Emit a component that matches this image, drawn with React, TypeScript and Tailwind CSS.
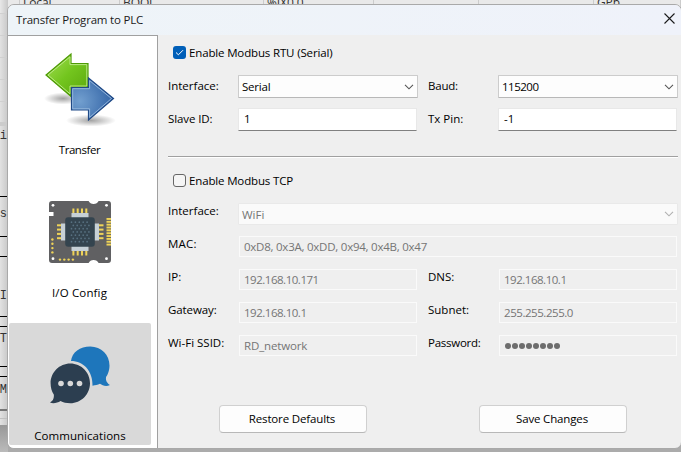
import React from "react";

const font = "font-['Open_Sans','Noto_Sans',sans-serif]";

function Chevron({ color }: { color: string }) {
  return (
    <svg className="mr-[3px] shrink-0" width="10" height="6" viewBox="0 0 10 6" fill="none" stroke={color} strokeWidth="1.1">
      <path d="M1 0.9 5 4.8 9 0.9" />
    </svg>
  );
}

function Label({ children, track = "" }: { children: string; track?: string }) {
  return <span className={`block h-[16px] w-[70px] shrink-0 whitespace-nowrap leading-[16px] ${track}`}>{children}</span>;
}

function Combo({ value, track = "", disabled }: { value: string; track?: string; disabled?: boolean }) {
  return (
    <div
      className={`flex min-w-0 flex-1 items-center justify-between rounded-[1px] border pl-[3px] ${
        disabled ? "h-[22px] border-[#e9e9e9] bg-[#fafafa] text-[#757575]" : "h-[23px] border-[#cccccc] border-b-[#b8b8b8] bg-[#fdfdfd]"
      }`}
    >
      <span className={`whitespace-nowrap pt-px leading-[16px] ${track}`}>{value}</span>
      <Chevron color={disabled ? "#b0b0b0" : "#555555"} />
    </div>
  );
}

function Field({ value }: { value: string }) {
  return (
    <div className="mr-px h-[23px] min-w-0 flex-1 border border-[#e8e8e8] border-b-[#808080] bg-white pl-[5px]">
      <span className="block leading-[20px]">{value}</span>
    </div>
  );
}

function DisabledField({ value, track = "" }: { value: string; track?: string }) {
  return (
    <div className="ml-px mr-px h-[21px] min-w-0 flex-1 border border-[#fafafa] bg-[#efefef] pl-[4px] text-[#757575]">
      <span className={`block whitespace-nowrap leading-[19px] ${track}`}>{value}</span>
    </div>
  );
}

function Dots() {
  return (
    <div className="ml-px mr-px flex h-[21px] min-w-0 flex-1 items-center gap-[1px] border border-[#fafafa] pl-[5px]">
      {Array.from({ length: 8 }, (_, i) => (
        <span key={i} className="size-[6px] rounded-full bg-[#6d6d6d]" />
      ))}
    </div>
  );
}

function TransferIcon() {
  return (
    <svg width="72" height="76" viewBox="44 51 72 76">
      <defs>
        <linearGradient id="green" x1="0" y1="0" x2="1" y2="1">
          <stop offset="0" stopColor="#a5df57" />
          <stop offset="0.5" stopColor="#73c51e" />
          <stop offset="1" stopColor="#59a60c" />
        </linearGradient>
        <radialGradient id="blue" cx="0.2" cy="0.55" r="0.75">
          <stop offset="0" stopColor="#729fcf" />
          <stop offset="1" stopColor="#3667a8" />
        </radialGradient>
        <radialGradient id="shade">
          <stop offset="0" stopColor="#000" stopOpacity="0.36" />
          <stop offset="1" stopColor="#000" stopOpacity="0" />
        </radialGradient>
      </defs>
      <ellipse cx="63" cy="98.5" rx="19" ry="6" fill="url(#shade)" />
      <ellipse cx="91" cy="120.5" rx="25" ry="6" fill="url(#shade)" />
      <path d="M71 54 V63.5 H88 V87 H71 V96.5 L46 75 Z" fill="url(#green)" stroke="#4e9a06" strokeWidth="1.2" />
      <path d="M70 56.8 V64.6 H86.8 V86 H70 V93.8 L48 75 Z" fill="none" stroke="#c2ec8e" strokeWidth="0.9" />
      <path d="M71.5 87.5 H88.5 V78 L113.5 98.5 L88.5 120 V110 H71.5 Z" fill="url(#blue)" stroke="#204a87" strokeWidth="1.2" />
      <path d="M72.7 88.7 H89.6 V80.6 L111.5 98.5 L89.6 117.4 V108.8 H72.7 Z" fill="none" stroke="#9bbbdf" strokeWidth="0.9" />
    </svg>
  );
}

function BoardIcon() {
  const pins = [0, 1, 2, 3];
  return (
    <svg width="62" height="62" viewBox="49 201 62 62">
      <path
        d="M52 201 H88.6 A5.5 5 0 0 0 98.6 201 H108 Q111 201 111 204 V260 Q111 263 108 263 H98.6 A5.5 5 0 0 0 88.6 263 H52 Q49 263 49 260 V216 H53.5 V212 H49 V204 Q49 201 52 201 Z"
        fill="#606062"
      />
      {[[53, 205.3], [106.5, 205.3], [53, 258.7], [106.5, 258.7]].map(([x, y]) => (
        <circle key={`${x}-${y}`} cx={x} cy={y} r="1.4" fill="#fff" />
      ))}
      <g fill="#efd358">
        {pins.map((i) => (
          <React.Fragment key={i}>
            <rect x={72.4 + i * 4.3} y="208.5" width="2" height="5.5" />
            <rect x={72.4 + i * 4.3} y="250" width="2" height="5.5" />
            <rect x="57" y={224.3 + i * 4.3} width="5" height="2" />
            <rect x="98" y={224.3 + i * 4.3} width="5.5" height="2" />
            <circle cx="52.4" cy={239.5 + i * 4.3} r="1.2" />
            <circle cx={60 + i * 4.3} cy="259.6" r="1.2" />
          </React.Fragment>
        ))}
        {Array.from({ length: 10 }, (_, i) => (
          <rect key={i} x="106.5" y={218 + i * 2.85} width="4.5" height="1.9" />
        ))}
      </g>
      <g fill="#c6d0d6">
        <rect x="71.5" y="213" width="17" height="5" />
        <rect x="71.5" y="246" width="17" height="5" />
        <rect x="61" y="223.5" width="5" height="17" />
        <rect x="94" y="223.5" width="5" height="17" />
      </g>
      <rect x="65.2" y="217.2" width="29.6" height="29.6" rx="3" fill="#34444f" />
      <g fill="#587181">
        {Array.from({ length: 35 }, (_, i) => {
          const row = Math.floor(i / 5);
          return <circle key={i} cx={71.5 + (i % 5) * 3.9 + (row % 2) * 1.8} cy={222.2 + row * 3.25} r="0.85" />;
        })}
      </g>
    </svg>
  );
}

function ChatIcon() {
  return (
    <svg width="60" height="58" viewBox="50 346 60 58">
      <path
        d="M71 361 C72 352 80 346.4 90.3 346.4 C101.3 346.4 109.5 354.8 109.5 365.5 C109.5 371 107.5 375 106 377 C105.5 381 107.5 383.5 110 385 C106 387 102.5 385.5 100 383.8 C97.5 385 95.5 385.3 92.5 385.7 C92.8 371 83.5 361 71 361 Z"
        fill="#1e76bb"
      />
      <path
        d="M70.3 363.5 C81.2 363.5 90 372.3 90 383.3 C90 394.4 81.2 403.3 70.3 403.3 C66.5 403.3 63.2 402.3 60.5 401 C57.5 403 53 403.8 49.8 402.5 C52.8 401 54.3 398.5 53.8 394.5 C51.6 391.4 50.6 387.5 50.6 383.3 C50.6 372.3 59.4 363.5 70.3 363.5 Z"
        fill="#2c3e50"
      />
      {[61, 70.3, 79.5].map((x) => (
        <circle key={x} cx={x} cy="383.5" r="2.8" fill="#d9d9d9" />
      ))}
    </svg>
  );
}

const topCells = [
  { text: "", w: "w-[20px]" },
  { text: "Local", w: "w-[100px]" },
  { text: "BOOL", w: "w-[144px]" },
  { text: "%IX0.0", w: "w-[110px]" },
  { text: "", w: "w-[105px]" },
  { text: "", w: "w-[115px]" },
  { text: "GPb", w: "w-[87px]" },
];

const gutter = [
  { h: "h-[14px]", c: "border-b border-[#d0d0d0]", t: "" },
  { h: "h-[22px]", c: "border-b border-[#d0d0d0]", t: "" },
  { h: "h-[22px]", c: "border-b border-[#d0d0d0]", t: "" },
  { h: "h-[22px]", c: "border-b border-[#d0d0d0]", t: "" },
  { h: "h-[22px]", c: "border-b border-[#d0d0d0]", t: "" },
  { h: "h-[24px]", c: "border-b-4 border-[#cccccc]", t: "" },
  { h: "h-[71px]", c: "border-b border-black pt-[2px]", t: "i" },
  { h: "h-[40px]", c: "border-b border-black pt-[9px]", t: "es" },
  { h: "h-[20px]", c: "border-b border-black", t: "" },
  { h: "h-[60px]", c: "border-b border-black pt-[31px]", t: "I" },
  { h: "h-[10px]", c: "border-b border-black", t: "" },
  { h: "h-[40px]", c: "border-b border-black pt-[4px]", t: "T" },
  { h: "h-[10px]", c: "border-b border-black", t: "" },
  { h: "h-[32px]", c: "pt-[5px]", t: "M" },
  { h: "h-[2px]", c: "bg-[#777777]", t: "" },
  { h: "h-[8px]", c: "border-b border-[#c0c0c0]", t: "" },
  { h: "h-[7px]", c: "border-b border-[#999999]", t: "" },
  { h: "h-[27px]", c: "bg-linear-to-b from-[#999999] to-[#bcbcbc]", t: "" },
];

function EditorBackdrop() {
  return (
    <div className="h-[452px] w-[681px] overflow-hidden bg-[#ababab]">
      <div className="flex h-[14px] overflow-hidden bg-[#e9e9e9] text-[12px] tracking-[-0.1px] text-[#333333]">
        {topCells.map((c, i) => (
          <span key={i} className={`-mt-[5px] h-[20px] shrink-0 border-r border-[#cccccc] pl-[3px] leading-[16px] ${c.w}`}>
            {c.text}
          </span>
        ))}
      </div>
      <div className="-mt-[14px] w-[8px] bg-linear-to-r from-[#e8e8e8]/90 to-[#c8c8c8]">
        {gutter.map((g, i) => (
          <div
            key={i}
            className={`flex w-[8px] justify-end pr-px font-['Liberation_Mono',monospace] text-[12px] leading-[16px] text-[#333333] ${g.h} ${g.c}`}
          >
            {g.t}
          </div>
        ))}
      </div>
    </div>
  );
}

function Dialog() {
  return (
    <div className="absolute left-[7px] top-[4px] flex h-[445px] w-[675px] flex-col overflow-hidden rounded-[7px] border border-[#a9a9a9] bg-[#efefef]">
      <header className="flex h-[30px] shrink-0 items-center justify-between bg-linear-to-r from-[#eef4f8] to-[#eff2fa] pl-[8px] pr-[6px]">
        <span className="whitespace-nowrap tracking-[-0.2px] text-[#1a1a1a]">Transfer Program to PLC</span>
        <svg className="-mt-[3px]" width="11" height="11" viewBox="0 0 11 11" fill="none" stroke="#1b1b1b" strokeWidth="1.1">
          <path d="M0.5 0.5 10.5 10.5M10.5 0.5 0.5 10.5" />
        </svg>
      </header>
      <div className="flex min-h-0 flex-1">
        <nav className="flex w-[150px] shrink-0 flex-col border-r border-t border-[#a0a0a0] bg-white text-center">
          <div className="flex h-[143px] w-[143px] flex-col items-center pt-[15px]">
            <TransferIcon />
            <span className="mt-[15px] tracking-[-0.45px] leading-[16px]">Transfer</span>
          </div>
          <div className="flex h-[144px] w-[143px] flex-col items-center pt-[22px]">
            <div className="ml-px"><BoardIcon /></div>
            <span className="mt-[22px] leading-[16px] tracking-[0.15px]">I/O Config</span>
          </div>
          <div className="ml-px flex h-[122px] w-[142px] flex-col items-center rounded-[2px] bg-[#d9d9d9] pt-[23px]">
            <ChatIcon />
            <span className="mt-[24px] leading-[16px] tracking-[0.05px]">Communications</span>
          </div>
        </nav>
        <main className="flex w-[520px] shrink-0 flex-col pl-[10px] pt-[11px]">
          <div className="flex h-[13px] items-center gap-[3px] pl-[5px]">
            <span className="flex size-[13px] items-center justify-center rounded-[3px] bg-[#005fb8]">
              <svg width="9" height="7" viewBox="0 0 9 7" fill="none" stroke="#fff" strokeWidth="1">
                <path d="M1 3.5 3.4 5.8 8 1.2" />
              </svg>
            </span>
            <span className="whitespace-nowrap tracking-[-0.15px]">Enable Modbus RTU (Serial)</span>
          </div>
          <div className="mt-[16px] flex h-[33px] w-[510px] gap-[10px]">
            <div className="flex w-[250px]">
              <div className="pt-[3px]"><Label>Interface:</Label></div>
              <Combo value="Serial" track="tracking-[-0.2px]" />
            </div>
            <div className="flex w-[250px]">
              <div className="pt-[3px]"><Label track="tracking-[-0.2px]">Baud:</Label></div>
              <Combo value="115200" track="tracking-[-0.5px]" />
            </div>
          </div>
          <div className="flex h-[48px] w-[510px] gap-[10px]">
            <div className="flex w-[250px]">
              <div className="pt-[3px]"><Label track="tracking-[-0.1px]">Slave ID:</Label></div>
              <Field value="1" />
            </div>
            <div className="flex w-[250px]">
              <div className="pt-[3px]"><Label>Tx Pin:</Label></div>
              <Field value="-1" />
            </div>
          </div>
          <div className="h-[2px] w-[510px] border-b border-t border-b-white border-t-[#a0a0a0]" />
          <div className="mt-[16px] flex h-[13px] items-center gap-[3px] pl-[5px]">
            <span className="size-[13px] rounded-[3px] border border-[#666666] bg-[#f5f5f5]" />
            <span className="whitespace-nowrap tracking-[-0.15px]">Enable Modbus TCP</span>
          </div>
          <div className="mt-[16px] flex h-[33px] w-[510px]">
            <Label>Interface:</Label>
            <Combo value="WiFi" disabled />
          </div>
          <div className="flex h-[33px] w-[510px]">
            <Label track="tracking-[0.2px]">MAC:</Label>
            <DisabledField value="0xD8, 0x3A, 0xDD, 0x94, 0x4B, 0x47" track="tracking-[-0.24px]" />
          </div>
          <div className="flex h-[33px] w-[510px] gap-[10px]">
            <div className="flex w-[250px]"><Label>IP:</Label><DisabledField value="192.168.10.171" track="tracking-[-0.48px]" /></div>
            <div className="flex w-[250px]"><Label>DNS:</Label><DisabledField value="192.168.10.1" track="tracking-[-0.48px]" /></div>
          </div>
          <div className="flex h-[33px] w-[510px] gap-[10px]">
            <div className="flex w-[250px]"><Label track="tracking-[-0.1px]">Gateway:</Label><DisabledField value="192.168.10.1" track="tracking-[-0.48px]" /></div>
            <div className="flex w-[250px]"><Label>Subnet:</Label><DisabledField value="255.255.255.0" track="tracking-[-0.45px]" /></div>
          </div>
          <div className="flex h-[70px] w-[510px] gap-[10px]">
            <div className="flex w-[250px]"><Label>Wi-Fi SSID:</Label><DisabledField value="RD_network" track="tracking-[-0.15px]" /></div>
            <div className="flex w-[250px]"><Label track="tracking-[-0.25px]">Password:</Label><Dots /></div>
          </div>
          <div className="flex gap-[112px] pl-[51px]">
            {["Restore Defaults", "Save Changes"].map((t) => (
              <button key={t} className="h-[28px] w-[148px] rounded-[4px] border border-[#d0d0d0] border-b-[#b8b8b8] bg-[#fdfdfd] pr-[2px] leading-[16px] tracking-[-0.15px]">
                {t}
              </button>
            ))}
          </div>
        </main>
      </div>
    </div>
  );
}

export default function App() {
  return (
    <div className={`relative h-[452px] w-[681px] overflow-hidden bg-[#adadad] text-[11.5px] text-black ${font}`}>
      <EditorBackdrop />
      <Dialog />
    </div>
  );
}
